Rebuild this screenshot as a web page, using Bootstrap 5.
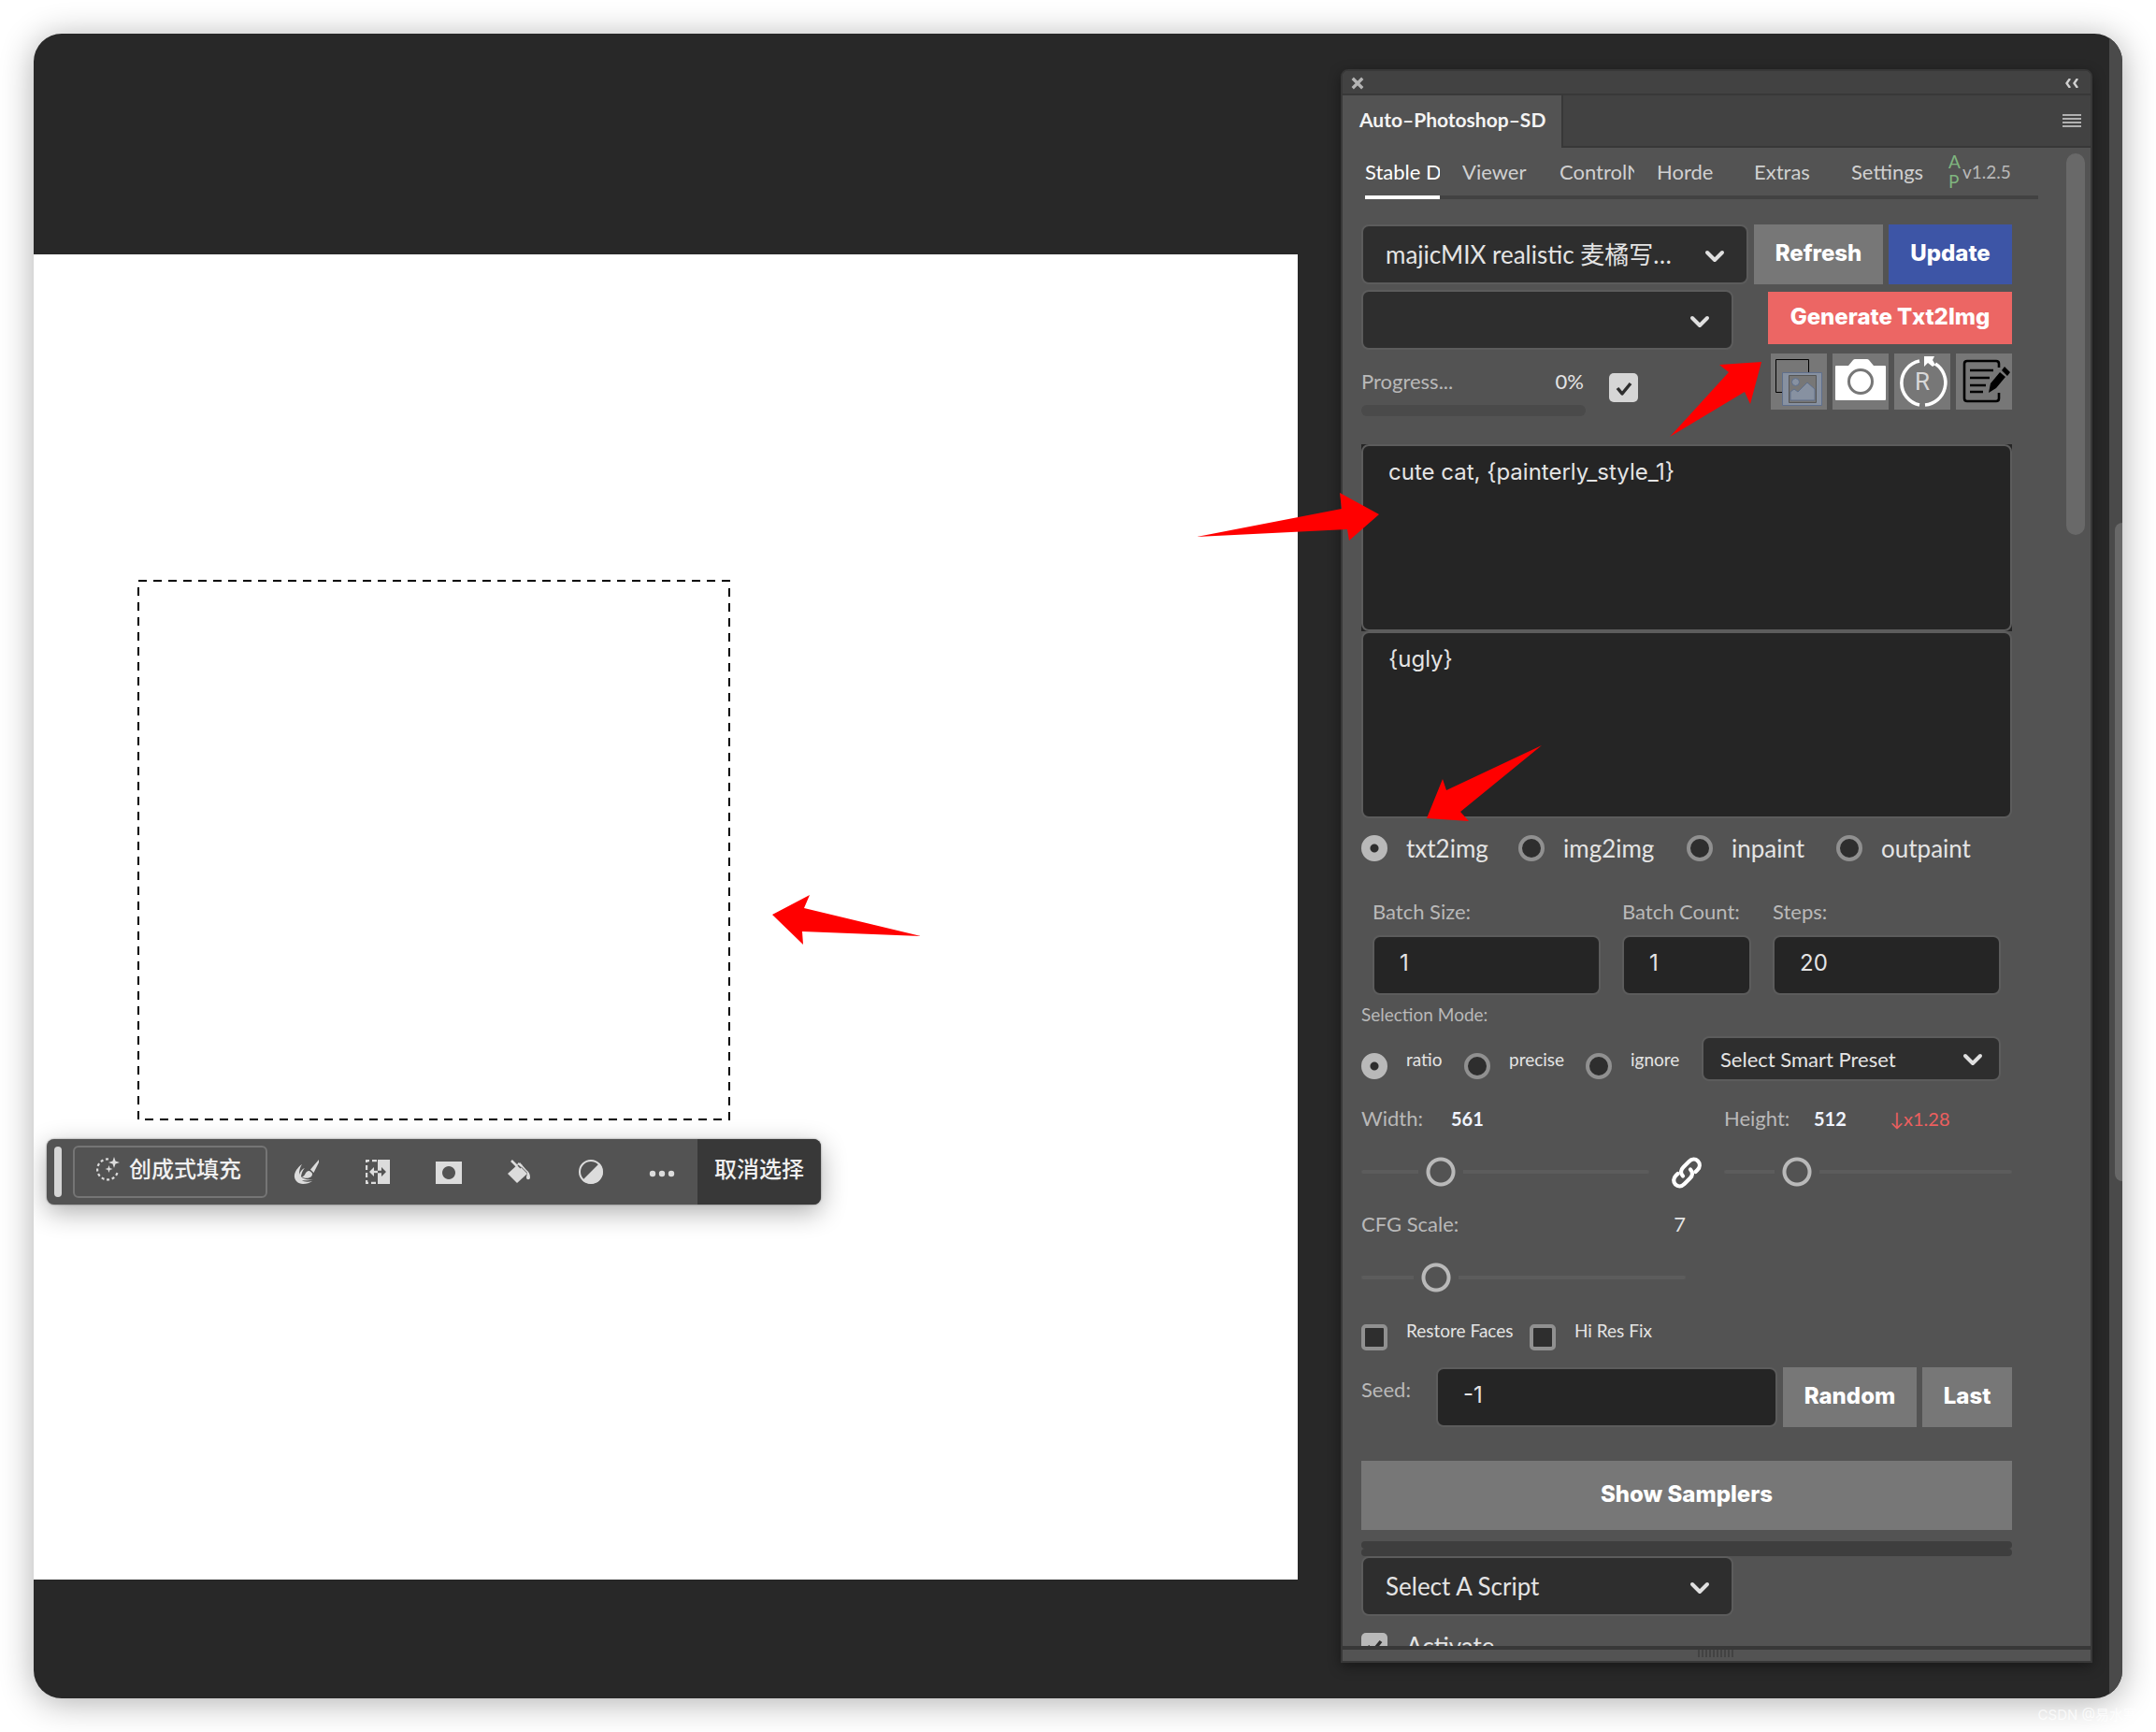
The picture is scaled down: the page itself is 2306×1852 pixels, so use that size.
<!DOCTYPE html>
<html lang="zh-CN">
<head>
<meta charset="utf-8">
<meta name="viewport" content="width=device-width, initial-scale=1">
<title>Auto-Photoshop-SD</title>
<link href="https://cdn.jsdelivr.net/npm/bootstrap@5.3.0/dist/css/bootstrap.min.css" rel="stylesheet">
<script src="https://cdn.jsdelivr.net/npm/bootstrap@5.3.0/dist/js/bootstrap.bundle.min.js"></script>
<style>
:root{--ui:Lato,"Noto Sans CJK SC",sans-serif;--sys:Inter,"Noto Sans CJK SC",sans-serif;--panel:#535353;--line:#383838;--edge:#5c5c5c}
body{background:#fff;font-family:var(--ui);font-size:22px;line-height:28px;color:#e4e4e4}
.stage{height:100vh;min-height:1852px;padding:36px}
.app-window{background:#282828;border-radius:30px;box-shadow:0 4px 36px rgba(0,0,0,.32)}
.app-clip{border-radius:30px;overflow:hidden}
.workspace{padding:236px 46px 127px 0}
.artboard{background:#fff}
.marquee{left:111px;top:348px;width:634px;height:578px}
.arrows{left:0;top:0;width:1px;height:1px;overflow:visible;pointer-events:none;fill:#f00}

/* floating task bar */
.taskbar{left:14px;top:946px;width:828px;height:70px;background:var(--panel);border-radius:8px;box-shadow:0 8px 28px rgba(0,0,0,.32),0 0 2px rgba(0,0,0,.5);font-size:24px;padding-left:8px}
.grip{width:8px;height:54px;border-radius:4px;background:#d6d6d6;margin-right:12px}
.fill-btn{width:208px;height:56px;border:2px solid #757575;border-radius:6px;color:#f0f0f0;font-size:24px;line-height:28px;margin-right:4px;padding:0 4px 6px 0;gap:10px;font-weight:500}
.tool-btn{width:76px;height:70px;padding:0;border:0;color:#dcdcdc}
.deselect{flex:1;height:70px;border:0;border-radius:0 8px 8px 0;background:var(--line);color:#f0f0f0;font-size:24px;line-height:28px;padding:0 0 6px;font-weight:500}

/* plugin panel */
.sd-panel{flex:0 0 804px;margin:38px 18px 38px 0;background:var(--panel);border:2px solid var(--line);border-radius:8px 8px 0 0;box-shadow:0 4px 14px rgba(0,0,0,.4)}
.panel-head{flex:0 0 26px;background:#424242;border-bottom:2px solid var(--line);border-radius:6px 6px 0 0;padding:2px 13px 0 9px}
.panel-tabs{flex:0 0 56px;background:#424242}
.panel-tab{width:236px;background:var(--panel);border-right:2px solid var(--line);color:#f4f4f4;font-size:21px;font-weight:700;padding:0 0 4px 18px}
.panel-rest{border-bottom:2px solid var(--line);padding-right:10px}
.panel-body{flex:1 1 0;min-height:0;overflow:hidden;padding-left:20px}
.panel-form{flex:1 1 auto;min-width:0;margin-right:58px}
.thumb{flex:0 0 20px;height:408px;border-radius:10px;background:#696969;margin:6px 6px 0 0}
.panel-foot{flex:0 0 16px;border-top:4px solid var(--line)}
.foot-grip{width:40px;height:8px;background:repeating-linear-gradient(90deg,#424242 0 2px,transparent 2px 4px)}

.sd-nav{height:55px;gap:24px;margin:0 -28px 27px 4px;box-shadow:inset 0 -4px #424242;flex-wrap:nowrap}
.sd-nav .nav-link{width:80px;padding:11px 0 0;color:#d0d0d0;overflow:hidden;white-space:nowrap;font-size:22px;line-height:30px}
.sd-nav .nav-link.active{color:#fff;border-bottom:4px solid #fff}
.ap{color:#7fb57f;width:15px;font-size:19px;line-height:21px;padding-top:4px}
.ver{color:#b9b9b9;padding-top:11px;font-size:19px;line-height:30px}

.sd-select,.sd-input{height:64px;border:2px solid var(--edge);border-radius:8px;color:#e4e4e4;box-shadow:none!important}
.sd-select{background-color:#2e2e2e;font-size:26px;line-height:32px;padding:0 60px 0 24px;background-repeat:no-repeat;background-size:22px 14px;background-position:right 23px top 25px;background-image:url("data:image/svg+xml,%3Csvg xmlns='http://www.w3.org/2000/svg' viewBox='0 0 22 14'%3E%3Cpath d='M3 3l8 8 8-8' fill='none' stroke='%23e0e0e0' stroke-width='4' stroke-linecap='round' stroke-linejoin='round'/%3E%3C/svg%3E")}
.sd-select.compact{height:48px;width:320px;font-size:22px;line-height:28px;padding:2px 50px 0 18px;background-position:right 17px top 16px}
.sd-select.mid{width:398px}
.sd-input{background:#252525!important;font-family:var(--sys);font-size:24px;line-height:28px;padding:0 27px 6px}
textarea.sd-input{height:200px;padding:14px 27px;resize:none;display:block}
.prompt-box{background:#252525;margin-top:30px}
.sd-btn{height:64px;border:0;border-radius:0;background:#777;color:#fff;font-family:var(--sys);font-weight:800;font-size:24px;line-height:28px;padding:0 0 2px}
.sd-btn.blue{background:#3d55a6}
.sd-btn.red{background:#ec6664;width:261px;height:56px}
.w-refresh{width:138px}.w-update{width:132px}.w-random{width:143px}.w-last{width:96px}
.icon-btn{width:60px;height:60px;padding:0;border:0;border-radius:0;background:#777}
.icon-btn svg{display:block}
.gap6{gap:6px}
.run-row{margin-top:6px}
.run-col{padding-top:2px;gap:10px}
.lbl{color:#b9b9b9}
.progress-col{width:240px}
.progress-col .pct{padding-right:2px}
.progress-track{height:12px;border-radius:6px;background:#4a4a4a;margin-top:11px}
.progress-row{margin-top:20px;gap:25px}

.form-check-input.dot,.form-check-input.tick{width:28px;height:28px;margin:0;border:4px solid #909090;background:#2e2e2e;box-shadow:none;flex:none}
.form-check-input.tick{border-radius:5px}
.form-check-input.dot:checked{border-color:#b9b9b9;background:radial-gradient(circle,#2e2e2e 0 4px,#b9b9b9 5px);background-origin:border-box}
.form-check-input.tick:checked{border:0;background:#b9b9b9 url("data:image/svg+xml,%3Csvg xmlns='http://www.w3.org/2000/svg' viewBox='0 0 28 28'%3E%3Cpath d='M7 14l5 6L21 9' fill='none' stroke='%232e2e2e' stroke-width='3.500' stroke-linejoin='round'/%3E%3C/svg%3E") center/28px 28px no-repeat}
.form-check-input.tick.big:checked{width:31px;height:31px;margin-top:5px;background-color:#d6d6d6}
.opt{gap:20px}
.modes{height:32px;margin-top:16px;font-size:26px;line-height:32px}
.opt.m1{width:168px}.opt.m2{width:180px}.opt.m3{width:160px}
.small-opt{font-size:19px;line-height:24px;gap:20px}
.small-opt .form-check-input{margin-top:5px}
.n1{width:110px}.n2{width:130px}.n3{width:124px}.n4{width:180px}
.nums{padding:0 12px;margin-top:38px}
.num-a{width:244px}.num-b{width:138px}
.num-a label,.num-b label{display:block;line-height:28px;margin-bottom:11px}
.sel-label{font-size:19px;line-height:24px;margin-top:9px}
.sel-row{margin-top:11px}
.sel-row .small-opt{margin-top:13px}
.size-row{margin-top:26px}
.size-col{width:308px}
.size-col .val{color:#f0f4ff;font-size:20px;font-weight:700}
.size-col .name{width:96px}.size-col .num{width:81px}
.size-col .sd-range{margin-top:27px}
.scale-warn{color:#ec5f5f;font-size:20px}
.link-box{width:80px;height:32px}
.sd-range{appearance:none;-webkit-appearance:none;display:block;width:100%;height:32px;margin:0;background:transparent;padding:0}
.sd-range::-webkit-slider-runnable-track{height:4px;border-radius:2px;background:#5c5c5c}
.sd-range::-webkit-slider-thumb{-webkit-appearance:none;width:48px;height:32px;margin-top:-14px;border:0;border-radius:0;background:radial-gradient(circle,var(--panel) 0 11px,#b9b9b9 12px 15px,var(--panel) 16px)}
.cfg{width:347px;margin-top:26px}
.cfg .sd-range{margin-top:27px}
.faces{margin-top:29px}
.seed{margin-top:18px}
.seed label{flex:0 0 80px;padding-top:10px}
.samplers{height:74px;margin-top:36px;margin-bottom:12px;width:100%}
.bar-line{height:8px;border-radius:4px;background:#3e3e3e}
.activate{margin-top:18px;height:28px;line-height:28px;font-size:26px}

.app-scroll{flex:0 0 14px;background:#4a4a4a;padding:523px 0 0 6px;overflow:hidden}
.app-thumb{width:16px;height:704px;border-radius:8px;background:#686868}
.watermark{right:20px;bottom:6px;font-family:Inter,"Noto Sans CJK SC",sans-serif;font-size:15px;line-height:24px;color:rgba(255,255,255,.75)}
</style>
</head>
<body>
<main class="stage position-relative">
<div class="app-window h-100"><div class="app-clip d-flex h-100">

<section class="workspace flex-grow-1 d-flex">
  <div class="artboard flex-grow-1 position-relative">
    <svg class="marquee position-absolute" viewBox="0 0 634 578"><rect x="1" y="1" width="632" height="576" fill="none" stroke="#000" stroke-width="2" stroke-dasharray="9 7"/></svg>
    <div class="taskbar position-absolute d-flex align-items-center" role="toolbar">
      <span class="grip"></span>
      <button class="btn fill-btn d-flex align-items-center justify-content-center" type="button">
        <svg width="26" height="26" viewBox="0 0 26 26"><path d="M14 2.500A11 11 0 1 0 24 15" fill="none" stroke="#dcdcdc" stroke-width="2.200" stroke-dasharray="3 2.700"/><path d="M20 0l1.500 4.500L26 6l-4.500 1.500L20 12l-1.500-4.500L14 6l4.500-1.500zM14.500 9l1 3 3 1-3 1-1 3-1-3-3-1 3-1z" fill="#dcdcdc"/></svg>
        <span>创成式填充</span></button>
      <button class="btn tool-btn" type="button" aria-label="选择主体"><svg width="28" height="28" viewBox="0 0 28 28"><path d="M27 1L18 11.500l3.500 3.500L27 4z" fill="currentColor"/><path d="M17 13c-3 0-4 2-5 4-.6 1.200-1.600 2-3 2.500 3 2 8 1.500 10-.5 1.500-1.500 1-3.500.5-4z" fill="currentColor"/><path d="M9 6C6 8 2 12 1 17c-1 6 4 10 9 10 4 0 7-1 10-3-4 1-9 1-11-1 3 .5 8 .5 12-1-5 1-11 0-13-3 1-5 2-7 4-9-3 1-5 4-6 7 0-5 1-8 3-11z" fill="currentColor"/></svg></button>
      <button class="btn tool-btn" type="button" aria-label="扩展"><svg width="26" height="26" viewBox="0 0 26 26"><path d="M13 0h13v26H13z" fill="currentColor"/><path d="M12 1H1v24h11" fill="none" stroke="currentColor" stroke-width="2.400" stroke-dasharray="5 3"/><path d="M13 13H7" stroke="currentColor" stroke-width="2.400"/><path d="M4 13l5-5v10z" fill="currentColor"/><path d="M13 11.800h4V8l5 5-5 5v-3.800h-4z" fill="#535353"/></svg></button>
      <button class="btn tool-btn" type="button" aria-label="蒙版"><svg width="28" height="24" viewBox="0 0 28 24"><path fill-rule="evenodd" d="M0 0h28v24H0zM14 5a7 7 0 1 0 .01 0z" fill="currentColor"/></svg></button>
      <button class="btn tool-btn" type="button" aria-label="填充"><svg width="28" height="26" viewBox="0 0 28 26"><path d="M1 15L12 5l10 10-11 10z" fill="currentColor"/><path d="M5 1l10 10M12 4l4 3" stroke="currentColor" stroke-width="2.600" fill="none"/><path d="M12 6l3 3" stroke="#535353" stroke-width="1.400"/><path d="M14 3l7 8c3 2 4 5 4 8s-4 3-4 0c0-2 1-3 1-5l-8-8z" fill="currentColor"/></svg></button>
      <button class="btn tool-btn" type="button" aria-label="调整"><svg width="26" height="26" viewBox="0 0 26 26"><circle cx="13" cy="13" r="12" fill="none" stroke="currentColor" stroke-width="2"/><path d="M22 4A12.500 12.500 0 1 1 4 22z" fill="currentColor"/></svg></button>
      <button class="btn tool-btn" type="button" aria-label="更多"><svg width="28" height="8" viewBox="0 0 28 8" fill="currentColor"><circle cx="4" cy="4" r="3.200"/><circle cx="14" cy="4" r="3.200"/><circle cx="24" cy="4" r="3.200"/></svg></button>
      <button class="btn deselect" type="button">取消选择</button>
    </div>
    <svg class="arrows position-absolute"><path d="M790 706l40-21-6 14 125 30-127-5 1 14z"/></svg>
  </div>
</section>

<section class="sd-panel d-flex flex-column position-relative">
  <header class="panel-head d-flex align-items-center justify-content-between">
    <svg width="14" height="14" viewBox="0 0 12 12"><path d="M1.500 1.500l9 9M10.500 1.500l-9 9" stroke="#b4b4b4" stroke-width="2.800"/></svg>
    <svg width="14" height="10" viewBox="0 0 14 10"><path d="M5 0L1.500 5 5 10M13 0L9.500 5 13 10" fill="none" stroke="#d0d0d0" stroke-width="2.400"/></svg>
  </header>
  <div class="panel-tabs d-flex">
    <div class="panel-tab d-flex align-items-center">Auto–Photoshop–SD</div>
    <div class="panel-rest flex-grow-1 d-flex align-items-center justify-content-end">
      <svg width="20" height="14" viewBox="0 0 20 14"><path d="M0 1h20M0 5h20M0 9h20M0 13h20" stroke="#b0b0b0" stroke-width="2"/></svg>
    </div>
  </div>
  <div class="panel-body d-flex">
    <form class="panel-form" onsubmit="return false">
      <nav class="nav sd-nav">
        <a class="nav-link active" href="#">Stable D</a><a class="nav-link" href="#">Viewer</a><a class="nav-link" href="#">ControlN</a><a class="nav-link" href="#">Horde</a><a class="nav-link" href="#">Extras</a><a class="nav-link" href="#">Settings</a>
        <span class="d-flex"><span class="ap">A<br>P</span><span class="ver">v1.2.5</span></span>
      </nav>

      <div class="d-flex gap6">
        <select class="form-select sd-select flex-grow-1" aria-label="Model"><option>majicMIX realistic 麦橘写…</option></select>
        <button class="btn sd-btn w-refresh flex-shrink-0" type="button">Refresh</button>
        <button class="btn sd-btn blue w-update flex-shrink-0" type="button">Update</button>
      </div>

      <div class="d-flex justify-content-between run-row">
        <div>
          <select class="form-select sd-select mid" aria-label="VAE"><option></option></select>
          <div class="d-flex progress-row">
            <div class="progress-col">
              <div class="d-flex justify-content-between"><span class="lbl">Progress...</span><span class="pct">0%</span></div>
              <div class="progress-track"></div>
            </div>
            <input class="form-check-input tick big" type="checkbox" checked aria-label="Live preview">
          </div>
        </div>
        <div class="d-flex flex-column align-items-end run-col">
          <button class="btn sd-btn red" type="button">Generate Txt2Img</button>
          <div class="d-flex gap6">
            <button class="btn icon-btn" type="button" aria-label="Layers"><svg width="60" height="60" viewBox="0 0 60 60"><path d="M5.500 6.500h35v35h-35z" fill="none" stroke="#000"/><path d="M12.500 20.500h42v35h-42z" fill="#8791a1" stroke="#5f6f8b"/><path d="M19.500 23.500h29v29h-29z" fill="#777" stroke="#555"/><circle cx="26.500" cy="30.500" r="4" fill="#8791a1" stroke="#5f6f8b"/><path d="M21 50v-9l4-3 4 3 10-10 8 7v12z" fill="#8791a1" stroke="#5f6f8b"/></svg></button>
            <button class="btn icon-btn" type="button" aria-label="Snapshot"><svg width="60" height="60" viewBox="0 0 60 60"><path d="M3 14q0-1 1-1h13l5-6q1-1 2-1h13q1 0 2 1l5 6h12q1 0 1 1v35q0 1-1 1H4q-1 0-1-1z" fill="#fff"/><circle cx="30" cy="30" r="12.500" fill="#fff" stroke="#777" stroke-width="3"/></svg></button>
            <button class="btn icon-btn" type="button" aria-label="Reset"><svg width="60" height="60" viewBox="0 0 60 60"><path d="M27 8A24 24 0 0 0 27 55M33 55A24 24 0 0 0 44 11" fill="none" stroke="#fff" stroke-width="3.600"/><path d="M32 3h11l-2 4 3 5-3 2-5-4-4 4z" fill="#fff"/><text x="30" y="39" text-anchor="middle" font-family="Roboto,sans-serif" font-size="26" fill="#d8d8d8">R</text></svg></button>
            <button class="btn icon-btn" type="button" aria-label="Prompt notes"><svg width="60" height="60" viewBox="0 0 60 60"><path d="M46 15v-4q0-3-3-3H12q-3 0-3 3v37q0 3 3 3h31q3 0 3-3v-6" fill="none" stroke="#000" stroke-width="2.600"/><path d="M15 18h25M15 26h21M15 34h17M15 41h14" stroke="#000" stroke-width="2.600"/><path d="M35 42l2-10 10-12 6 5-10 12zM49 18l3-4 6 6-3 4z" fill="#000"/></svg></button>
          </div>
        </div>
      </div>

      <div class="prompt-box"><textarea class="form-control sd-input" aria-label="Prompt">cute cat, {painterly_style_1}</textarea></div>
      <textarea class="form-control sd-input" aria-label="Negative prompt">{ugly}</textarea>

      <div class="d-flex modes">
        <div class="d-flex align-items-center opt m1"><input class="form-check-input dot" type="radio" name="mode" id="mo1" checked><label for="mo1">txt2img</label></div>
        <div class="d-flex align-items-center opt m2"><input class="form-check-input dot" type="radio" name="mode" id="mo2"><label for="mo2">img2img</label></div>
        <div class="d-flex align-items-center opt m3"><input class="form-check-input dot" type="radio" name="mode" id="mo3"><label for="mo3">inpaint</label></div>
        <div class="d-flex align-items-center opt"><input class="form-check-input dot" type="radio" name="mode" id="mo4"><label for="mo4">outpaint</label></div>
      </div>

      <div class="d-flex justify-content-between nums">
        <div class="num-a"><label class="lbl" for="bs">Batch Size:</label><input class="form-control sd-input" id="bs" value="1"></div>
        <div class="num-b"><label class="lbl" for="bc">Batch Count:</label><input class="form-control sd-input" id="bc" value="1"></div>
        <div class="num-a"><label class="lbl" for="st">Steps:</label><input class="form-control sd-input" id="st" value="20"></div>
      </div>

      <div class="lbl sel-label">Selection Mode:</div>
      <div class="d-flex sel-row">
        <div class="d-flex small-opt n1"><input class="form-check-input dot" type="radio" name="sel" id="s1" checked><label for="s1">ratio</label></div>
        <div class="d-flex small-opt n2"><input class="form-check-input dot" type="radio" name="sel" id="s2"><label for="s2">precise</label></div>
        <div class="d-flex small-opt n3"><input class="form-check-input dot" type="radio" name="sel" id="s3"><label for="s3">ignore</label></div>
        <select class="form-select sd-select compact" aria-label="Smart preset"><option>Select Smart Preset</option></select>
      </div>

      <div class="d-flex size-row">
        <div class="size-col">
          <div class="d-flex"><label class="lbl name" for="rw">Width:</label><span class="val">561</span></div>
          <input class="sd-range" type="range" id="rw" min="64" max="2182" value="561">
        </div>
        <div class="link-box d-flex align-self-end justify-content-center"><svg width="36" height="34" viewBox="0 0 34 34"><g fill="none" stroke="#fff" stroke-width="4.200" stroke-linecap="round" stroke-linejoin="round"><path d="M13 20.500c-3-3-2.500-6.500.5-9.500l6-6c3-3 7-3 9.500-.5s2.500 6.500-.5 9.500l-2 2"/><path d="M21 13.500c3 3 2.500 6.500-.5 9.500l-6 6c-3 3-7 3-9.500.5s-2.500-6.500.5-9.500l2-2"/></g></svg></div>
        <div class="size-col">
          <div class="d-flex"><label class="lbl name" for="rh">Height:</label><span class="val num">512</span><span class="scale-warn">↓x1.28</span></div>
          <input class="sd-range" type="range" id="rh" min="64" max="2221" value="512">
        </div>
      </div>

      <div class="cfg">
        <div class="d-flex justify-content-between"><label class="lbl" for="cf">CFG Scale:</label><span>7</span></div>
        <input class="sd-range" type="range" id="cf" min="1" max="33" value="7">
      </div>

      <div class="d-flex faces">
        <div class="d-flex small-opt n4"><input class="form-check-input tick" type="checkbox" id="rf"><label for="rf">Restore Faces</label></div>
        <div class="d-flex small-opt"><input class="form-check-input tick" type="checkbox" id="hr"><label for="hr">Hi Res Fix</label></div>
      </div>

      <div class="d-flex seed">
        <label class="lbl" for="sd">Seed:</label>
        <div class="d-flex gap6 flex-grow-1"><input class="form-control sd-input" id="sd" value="-1">
        <button class="btn sd-btn w-random flex-shrink-0" type="button">Random</button>
        <button class="btn sd-btn w-last flex-shrink-0" type="button">Last</button></div>
      </div>

      <button class="btn sd-btn samplers" type="button">Show Samplers</button>
      <div class="bar-line"></div><div class="bar-line"></div>
      <select class="form-select sd-select mid" aria-label="Script"><option>Select A Script</option></select>
      <div class="d-flex opt activate"><input class="form-check-input tick" type="checkbox" id="ac" checked><label for="ac">Activate</label></div>
    </form>
    <div class="thumb"></div>
  </div>
  <footer class="panel-foot d-flex justify-content-center"><span class="foot-grip"></span></footer>
  <svg class="arrows position-absolute"><path d="M448 311l-45 3 10 8-63 69 80-48 6 13zM39 474l-42-23 2 17-155 30 161-8 2 12zM90 799l17-42 4 12 102-48-87 71 9 10z"/></svg>
</section>

<div class="app-scroll"><div class="app-thumb"></div></div>
</div></div>
<span class="watermark position-absolute">CSDN @易水寒</span>
</main>
</body>
</html>
